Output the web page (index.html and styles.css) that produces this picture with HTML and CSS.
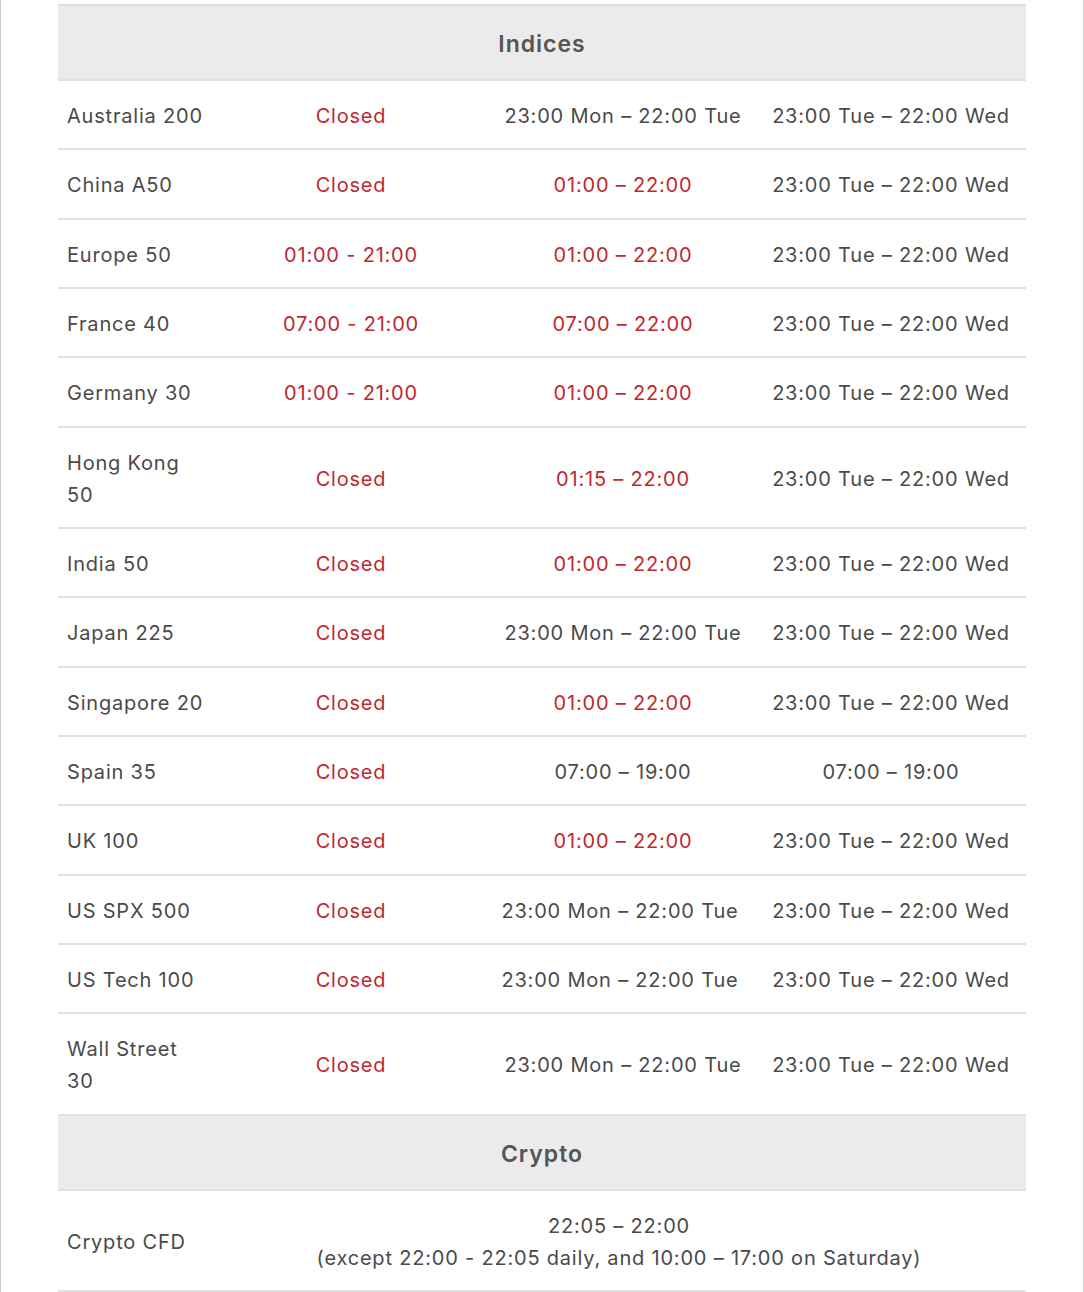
FILE: index.html
```html
<!DOCTYPE html>
<html lang="en">
<head>
<meta charset="utf-8">
<title>Trading hours</title>
<link rel="stylesheet" href="styles.css">
</head>
<body>
<div class="frame">
  <table class="hours">
    <colgroup>
      <col class="c-name">
      <col class="c-a">
      <col class="c-b">
      <col class="c-c">
    </colgroup>
    <tbody>
      <tr class="group"><th colspan="4">Indices</th></tr>
      <tr><td class="name">Australia 200</td><td class="red">Closed</td><td>23:00 Mon – 22:00 Tue</td><td>23:00 Tue – 22:00 Wed</td></tr>
      <tr><td class="name">China A50</td><td class="red">Closed</td><td class="red">01:00 – 22:00</td><td>23:00 Tue – 22:00 Wed</td></tr>
      <tr><td class="name">Europe 50</td><td class="red">01:00 - 21:00</td><td class="red">01:00 – 22:00</td><td>23:00 Tue – 22:00 Wed</td></tr>
      <tr><td class="name">France 40</td><td class="red">07:00 - 21:00</td><td class="red">07:00 – 22:00</td><td>23:00 Tue – 22:00 Wed</td></tr>
      <tr><td class="name">Germany 30</td><td class="red">01:00 - 21:00</td><td class="red">01:00 – 22:00</td><td>23:00 Tue – 22:00 Wed</td></tr>
      <tr><td class="name">Hong Kong 50</td><td class="red">Closed</td><td class="red">01:15 – 22:00</td><td>23:00 Tue – 22:00 Wed</td></tr>
      <tr><td class="name">India 50</td><td class="red">Closed</td><td class="red">01:00 – 22:00</td><td>23:00 Tue – 22:00 Wed</td></tr>
      <tr><td class="name">Japan 225</td><td class="red">Closed</td><td>23:00 Mon – 22:00 Tue</td><td>23:00 Tue – 22:00 Wed</td></tr>
      <tr><td class="name">Singapore 20</td><td class="red">Closed</td><td class="red">01:00 – 22:00</td><td>23:00 Tue – 22:00 Wed</td></tr>
      <tr><td class="name">Spain 35</td><td class="red">Closed</td><td>07:00 – 19:00</td><td>07:00 – 19:00</td></tr>
      <tr><td class="name">UK 100</td><td class="red">Closed</td><td class="red">01:00 – 22:00</td><td>23:00 Tue – 22:00 Wed</td></tr>
      <tr><td class="name">US SPX 500</td><td class="red">Closed</td><td class="shift">23:00 Mon – 22:00 Tue</td><td>23:00 Tue – 22:00 Wed</td></tr>
      <tr><td class="name">US Tech 100</td><td class="red">Closed</td><td class="shift">23:00 Mon – 22:00 Tue</td><td>23:00 Tue – 22:00 Wed</td></tr>
      <tr><td class="name">Wall Street 30</td><td class="red">Closed</td><td>23:00 Mon – 22:00 Tue</td><td>23:00 Tue – 22:00 Wed</td></tr>
      <tr class="group"><th colspan="4">Crypto</th></tr>
      <tr><td class="name">Crypto CFD</td><td colspan="3" class="span">22:05 – 22:00<br>(except 22:00 - 22:05 daily, and 10:00 – 17:00 on Saturday)</td></tr>
    </tbody>
  </table>
</div>
</body>
</html>
```

FILE: styles.css
```css
html, body {
  margin: 0;
  padding: 0;
  background: #ffffff;
}

.frame {
  box-sizing: border-box;
  width: 1084px;
  min-height: 1292px;
  border-left: 1px solid #cfcfcf;
  border-right: 1px solid #cfcfcf;
  padding: 4px 0 0 57px;
}

.hours {
  width: 968px;
  table-layout: fixed;
  border-collapse: collapse;
  font-family: Inter, "Noto Sans", "Liberation Sans", sans-serif;
  font-size: 20px;
  line-height: 32px;
  color: #4a4a4a;
  letter-spacing: 0.8px;
}

.c-name { width: 154px; }
.c-a { width: 278px; }
.c-b { width: 266px; }
.c-c { width: 270px; }

.hours td {
  padding: 19px 2px 16.35px;
  text-align: center;
  border-bottom: 2px solid #e1e1e1;
  vertical-align: middle;
}

.hours td.name {
  text-align: left;
  padding-left: 9px;
  padding-right: 4px;
}

.hours td.shift {
  padding-right: 8px;
}

.hours td.red {
  color: #c0282e;
}

.group th {
  background: #ebebeb;
  border-top: 2px solid #dddddd;
  border-bottom: 2px solid #e1e1e1;
  padding: 22px 0 19px;
  font-size: 23px;
  font-weight: 600;
  letter-spacing: 1px;
  color: #555555;
  text-align: center;
}
```
